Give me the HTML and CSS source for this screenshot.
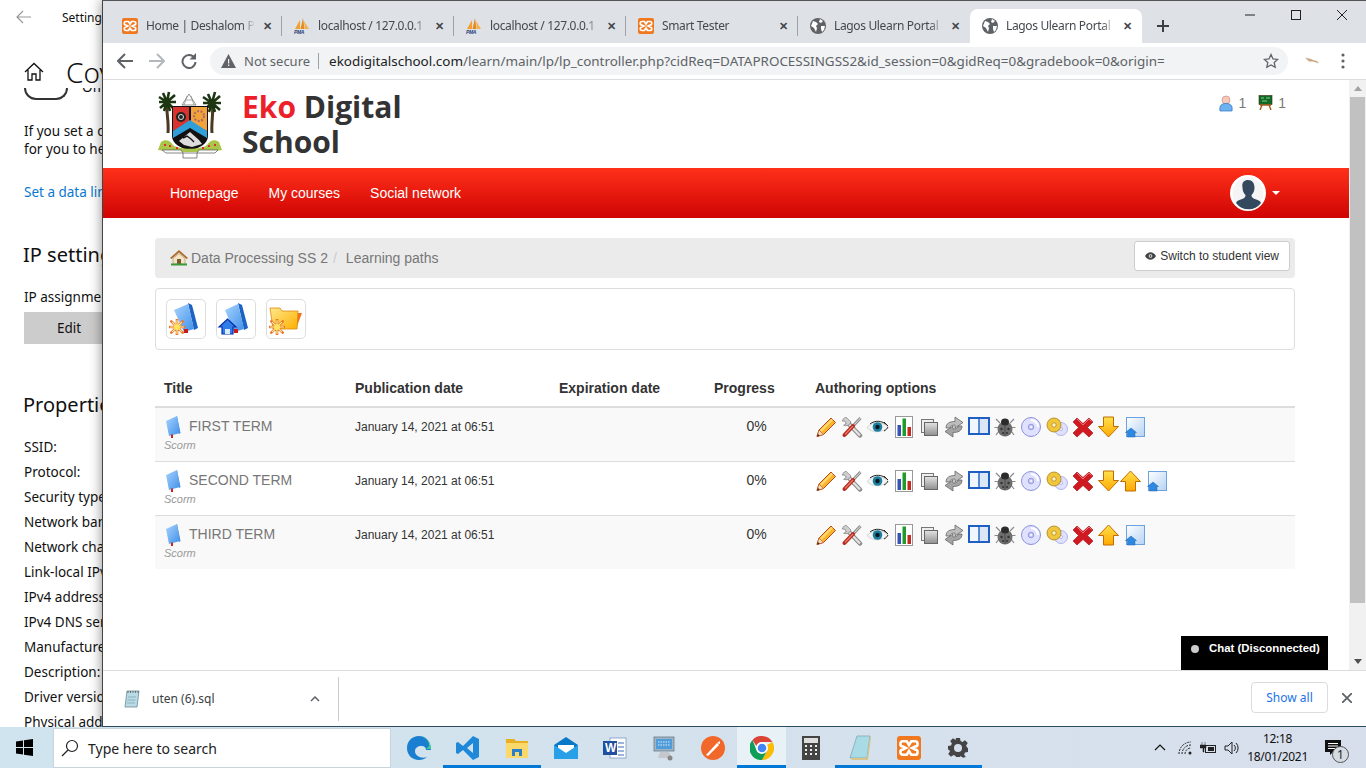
FILE: index.html
```html
<!doctype html>
<html lang="en">
<head>
  <meta charset="UTF-8">
  <meta name="viewport" content="width=device-width, initial-scale=1.0">
  <title>Lagos Ulearn Portal</title>
  <link rel="stylesheet" href="styles.css">
</head>
<body>

<svg class="defs" aria-hidden="true">
  <defs>
    <linearGradient id="g-yellow" x1="0" y1="0" x2="0" y2="1"><stop offset="0" stop-color="#ffe14d"/><stop offset="1" stop-color="#ffa800"/></linearGradient>
    <linearGradient id="g-grey" x1="0" y1="0" x2="0" y2="1"><stop offset="0" stop-color="#e4e4e4"/><stop offset="1" stop-color="#8f8f8f"/></linearGradient>
    <linearGradient id="g-blue" x1="0" y1="0" x2="1" y2="1"><stop offset="0" stop-color="#a8d4ff"/><stop offset="1" stop-color="#3f8fe8"/></linearGradient>
    <linearGradient id="g-page" x1="0" y1="0" x2="1" y2="1"><stop offset="0" stop-color="#ffffff"/><stop offset="1" stop-color="#b4d2f4"/></linearGradient>
    <linearGradient id="g-folder" x1="0" y1="0" x2="1" y2="1"><stop offset="0" stop-color="#ffe88a"/><stop offset="1" stop-color="#ffb000"/></linearGradient>

    <symbol id="i-xampp" viewBox="0 0 16 16">
      <rect width="16" height="16" rx="2" fill="#f0781e"/>
      <path d="M4 3.500h2.500L8 6l1.500-2.500H12a1.500 1.500 0 0 1 0 3.500L10 8l2 1a1.500 1.500 0 0 1 0 3.500H9.500L8 10l-1.500 2.500H4A1.500 1.500 0 0 1 4 9l2-1-2-1a1.500 1.500 0 0 1 0-3.500z" fill="none" stroke="#fff" stroke-width="1.700"/>
    </symbol>
    <symbol id="i-pma" viewBox="0 0 16 16">
      <path d="M1 11 6 2v9z" fill="#f0a030"/><path d="M6.500 11 9 0l1.500 11z" fill="#e88a1a"/><path d="M11 11 10 3l5 8z" fill="#f5b04a"/>
      <text x="0" y="16" class="pma-text">PMA</text>
    </symbol>
    <symbol id="i-globe" viewBox="0 0 16 16">
      <circle cx="8" cy="8" r="8" fill="#5f6368"/>
      <path d="M3 3l3 1 2 2-2 2 1 2-1 4-2-4-3-2zM10 1l3 2-2 2-2-1zM11 8h4l-1 4-2 2-1-3z" fill="#fff"/>
    </symbol>

    <symbol id="i-pencil" viewBox="0 0 22 22">
      <path d="M2 20.500 4 14 16 2l4.500 4.500L8.500 18.500z" fill="#f9b42c" stroke="#b8481c"/>
      <path d="M5 14 16.500 2.800l1.500 1.500L6.500 16z" fill="#ffd76a"/>
      <path d="M2 20.500 4 14l4.500 4.500z" fill="#f7dcb4" stroke="#b8481c" stroke-width=".6"/>
      <path d="M2 20.500l.8-2.800 2 2z" fill="#5c2410"/>
    </symbol>
    <symbol id="i-tools" viewBox="0 0 22 22">
      <path d="M7 7 19 19.500" stroke="#8d8d8d" stroke-width="4.500" stroke-linecap="round"/>
      <path d="M7 7 19 19.500" stroke="#e4e4e4" stroke-width="2.200"/>
      <path d="M5 1.200a5.500 5.500 0 0 0-3.800 3.800l3 .3 1 2.500-2.600 1.500A5.500 5.500 0 0 0 10 6z" fill="#cfcfcf" stroke="#7d7d7d" stroke-width=".7"/>
      <path d="M19.500 2 12 10" stroke="#8f8f8f" stroke-width="3"/>
      <path d="M19.500 2 12 10" stroke="#e0e0e0" stroke-width="1"/>
      <path d="M12 10 3.500 19" stroke="#b7291d" stroke-width="4" stroke-linecap="round"/>
      <path d="M12 10 4 18.500" stroke="#ec7d6a" stroke-width="1.200"/>
    </symbol>
    <symbol id="i-eye" viewBox="0 0 22 22">
      <path d="M0 11.500C5 6 15 5 21 11c-5 6-16 6.500-21 .5z" fill="#f4f4f4" stroke="#bbb" stroke-width=".6"/>
      <circle cx="10.500" cy="11" r="4.800" fill="#1b7fa0"/>
      <circle cx="10.500" cy="11" r="2.200" fill="#0a1820"/>
      <path d="M3 8C8 4 15 4.500 20 9M21 11c-1 2-2 3-4 4M17 6l4 4" fill="none" stroke="#222" stroke-width="1"/>
    </symbol>
    <symbol id="i-stats" viewBox="0 0 22 22">
      <rect x="2.500" y=".5" width="17" height="21" fill="#fff" stroke="#999"/>
      <rect x="4.500" y="9" width="3.500" height="11" fill="#3453b8"/>
      <rect x="9.500" y="2.500" width="3.500" height="17.500" fill="#1e9b2a"/>
      <rect x="14.500" y="11" width="3.500" height="9" fill="#c4281e"/>
    </symbol>
    <symbol id="i-copy" viewBox="0 0 21 22">
      <rect x="2.500" y="3.500" width="12" height="13" fill="#eee" stroke="#777"/>
      <rect x="5.500" y="6.500" width="13" height="13" fill="url(#g-grey)" stroke="#666"/>
    </symbol>
    <symbol id="i-sync" viewBox="0 0 20 22">
      <path d="M18 10c0 5-4 6.500-9 6.500V21l-8-5.500L9 10v3c3 0 5-1 5-3z" fill="#a4a4a4" stroke="#686868" stroke-width=".8"/>
      <path d="M2 12c0-5 4-6.500 9-6.500V1l8 5.500L11 12V9c-3 0-5 1-5 3z" fill="#bdbdbd" stroke="#686868" stroke-width=".8"/>
    </symbol>
    <symbol id="i-columns" viewBox="0 0 22 22">
      <rect x="0" y="1" width="22" height="18" fill="#1f5fc4"/>
      <rect x="2" y="3" width="8.300" height="14" fill="#f2f7ff"/>
      <rect x="11.700" y="3" width="8.300" height="14" fill="#dbe7f7"/>
    </symbol>
    <symbol id="i-bug" viewBox="0 0 22 22">
      <path d="M6 7 2 3M16 7l4-4M4 11.500H.5M18 11.500h3.500M5 15l-3 4M17 15l3 4" stroke="#8a8a8a" stroke-width="1.200"/>
      <ellipse cx="11" cy="13" rx="7.500" ry="7.500" fill="#6e6e6e"/>
      <ellipse cx="11" cy="6" rx="4" ry="3.500" fill="#2b2b2b"/>
      <path d="M11 8v12" stroke="#444" stroke-width=".8"/>
      <circle cx="7.500" cy="13" r="1.200" fill="#333"/><circle cx="14.500" cy="13" r="1.200" fill="#333"/><circle cx="9" cy="17" r="1" fill="#333"/><circle cx="13" cy="17" r="1" fill="#333"/>
    </symbol>
    <symbol id="i-cd" viewBox="0 0 22 22">
      <circle cx="11" cy="11" r="9.500" fill="#dfe1ff" stroke="#8b91dc"/>
      <path d="M11 4a7 7 0 0 1 7 7" fill="none" stroke="#fff" stroke-width="2"/>
      <circle cx="11" cy="11" r="2.800" fill="#c4c7f5" stroke="#7f85d4" stroke-width=".7"/>
      <circle cx="11" cy="11" r="1" fill="#fff"/>
    </symbol>
    <symbol id="i-audio" viewBox="0 0 22 22">
      <circle cx="15" cy="13" r="6.500" fill="#dfe1ff" stroke="#a0a5e4" stroke-width=".8"/>
      <circle cx="15" cy="13" r="1.500" fill="#fff" stroke="#8b91dc" stroke-width=".6"/>
      <circle cx="8" cy="9" r="7" fill="#f0c63c" stroke="#a8801a" stroke-width=".8"/>
      <circle cx="8" cy="9" r="2.200" fill="#fff3bf" stroke="#a8801a" stroke-width=".7"/>
    </symbol>
    <symbol id="i-del" viewBox="0 0 22 22">
      <path d="M5 2 11 7.500 17 2 21 6l-5.500 5.500L21 17l-4 4-6-5.500L5 21 1 17l5.500-5.500L1 6z" fill="#cf1a22" stroke="#9c0c12" stroke-width=".6"/>
      <path d="M5 3 11 9l6-6 2.500 2.500" fill="none" stroke="#f0737a" stroke-width="1"/>
    </symbol>
    <symbol id="i-down" viewBox="0 0 21 22">
      <path d="M5.500 1h10v9.500h5L10.500 21 .5 10.500h5z" fill="url(#g-yellow)" stroke="#c06c00"/>
    </symbol>
    <symbol id="i-up" viewBox="0 0 21 22">
      <path d="M5.500 21h10v-9.500h5L10.500 1 .5 11.500h5z" fill="url(#g-yellow)" stroke="#c06c00"/>
    </symbol>
    <symbol id="i-page" viewBox="0 0 22 22">
      <rect x="3.500" y="1.500" width="18" height="19" fill="url(#g-page)" stroke="#6aa3e0"/>
      <path d="M2.500 16.500 8 12l5.500 4.500H12V21H4.500v-4.500z" fill="#2f88e0" stroke="#1f62b0" stroke-width=".5"/>
    </symbol>
    <symbol id="i-book" viewBox="0 0 16 22">
      <path d="M12 0l3.500 17-1.500 1L11 1z" fill="#3f86d8"/>
      <path d="M1 5 12 0l3 17-11 3z" fill="url(#g-blue)"/>
      <rect x="6" y="18.500" width="2" height="3.500" fill="#d0241c"/>
    </symbol>
    <symbol id="i-burst" viewBox="0 0 16 16">
      <path d="M8 0v16M0 8h16M2.300 2.300l11.400 11.400M13.700 2.300 2.300 13.700" stroke="#e8782a" stroke-width="2.600" stroke-linecap="round"/>
      <path d="M8 1.500v13M1.500 8h13M3.400 3.400l9.200 9.200M12.600 3.400l-9.200 9.200" stroke="#fff2a8" stroke-width="1.100" stroke-linecap="round"/>
      <circle cx="8" cy="8" r="3" fill="#ffe45c"/>
    </symbol>
  </defs>
</svg>

<main class="desktop">
  <section class="settings">
    <div class="settings-top">
      <svg width="16" height="14" viewBox="0 0 16 14" class="settings-back"><path d="M7 1 1 7l6 6M1 7h14" fill="none" stroke="#999" stroke-width="1.200"/></svg>
      <span>Settings</span>
    </div>
    <div class="settings-head">
      <svg width="20" height="20" viewBox="0 0 20 20"><path d="M1 10 10 1.500 19 10M4 8v10h4v-6h4v6h4V8" fill="none" stroke="#111" stroke-width="1.300"/></svg>
      <span>Cov</span>
    </div>
    <div class="settings-toggle-row">
      <div class="settings-toggle"></div>
      <span>Off</span>
    </div>
    <p class="settings-text">If you set a data limit, Windows will set the<br>for you to help you stay under your limit.</p>
    <p class="settings-link">Set a data limit to help control usage</p>
    <h2 class="settings-h">IP settings</h2>
    <p class="settings-row">IP assignment:</p>
    <div class="settings-edit">Edit</div>
    <h2 class="settings-h settings-h-props">Properties</h2>
    <ul class="settings-list">
      <li>SSID:</li>
      <li>Protocol:</li>
      <li>Security type:</li>
      <li>Network band:</li>
      <li>Network channel:</li>
      <li>Link-local IPv6 address:</li>
      <li>IPv4 address:</li>
      <li>IPv4 DNS servers:</li>
      <li>Manufacturer:</li>
      <li>Description:</li>
      <li>Driver version:</li>
      <li>Physical address:</li>
    </ul>
  </section>

  <section class="browser">
    <div class="tabstrip">
      <div class="tab"><svg class="favicon"><use href="#i-xampp"/></svg><span class="tab-title">Home | Deshalom PHP Project</span><span class="tab-x">✕</span></div>
      <div class="tab"><svg class="favicon"><use href="#i-pma"/></svg><span class="tab-title">localhost / 127.0.0.1 | phpMyAdmin</span><span class="tab-x">✕</span></div>
      <div class="tab"><svg class="favicon"><use href="#i-pma"/></svg><span class="tab-title">localhost / 127.0.0.1 | phpMyAdmin</span><span class="tab-x">✕</span></div>
      <div class="tab"><svg class="favicon"><use href="#i-xampp"/></svg><span class="tab-title">Smart Tester</span><span class="tab-x">✕</span></div>
      <div class="tab tab-before-active"><svg class="favicon"><use href="#i-globe"/></svg><span class="tab-title">Lagos Ulearn Portal - Learning</span><span class="tab-x">✕</span></div>
      <div class="tab tab-active"><svg class="favicon"><use href="#i-globe"/></svg><span class="tab-title">Lagos Ulearn Portal - Learning</span><span class="tab-x">✕</span></div>
      <svg class="tab-new" width="14" height="14" viewBox="0 0 14 14"><path d="M7 1v12M1 7h12" stroke="#3c4043" stroke-width="2"/></svg>
      <div class="win-controls">
        <svg width="12" height="12" viewBox="0 0 12 12"><path d="M1 6h10" stroke="#222" stroke-width="1"/></svg>
        <svg width="12" height="12" viewBox="0 0 12 12"><rect x="1.500" y="1.500" width="9" height="9" fill="none" stroke="#222" stroke-width="1"/></svg>
        <svg width="12" height="12" viewBox="0 0 12 12"><path d="M1 1l10 10M11 1 1 11" stroke="#222" stroke-width="1"/></svg>
      </div>
    </div>

    <div class="toolbar">
      <svg class="nav-btn" width="16" height="16" viewBox="0 0 16 16"><path d="M8 1 1 8l7 7M1 8h15" fill="none" stroke="#5f6368" stroke-width="2"/></svg>
      <svg class="nav-btn" width="16" height="16" viewBox="0 0 16 16"><path d="M8 1l7 7-7 7M15 8H0" fill="none" stroke="#b4b7bb" stroke-width="2"/></svg>
      <svg class="nav-btn" width="16" height="16" viewBox="0 0 16 16"><path d="M13.500 5A6.500 6.500 0 1 0 14.500 9" fill="none" stroke="#5f6368" stroke-width="2"/><path d="M15 0v6.500H8.500z" fill="#5f6368"/></svg>
      <div class="omnibox">
        <svg width="15" height="14" viewBox="0 0 15 14"><path d="M7.500 0 15 14H0z" fill="#5f6368"/><path d="M7 5h1.200v4.500H7zM7 10.500h1.200V12H7z" fill="#f1f3f4"/></svg>
        <span class="not-secure">Not secure</span>
        <span class="omni-sep"></span>
        <span class="url"><b>ekodigitalschool.com</b>/learn/main/lp/lp_controller.php?cidReq=DATAPROCESSINGSS2&amp;id_session=0&amp;gidReq=0&amp;gradebook=0&amp;origin=</span>
        <svg class="omni-star" width="16" height="16" viewBox="0 0 16 16"><path d="M8 1.500l2 4.400 4.700.5-3.500 3.200 1 4.700L8 11.900l-4.200 2.400 1-4.700L1.300 6.400 6 5.900z" fill="none" stroke="#5f6368" stroke-width="1.300"/></svg>
      </div>
      <svg class="ext" width="14" height="8" viewBox="0 0 14 8"><path d="M0 .5l6 1.500 2 1 4 1 2 2.500-6-2-4 0z" fill="#c8a882"/></svg>
      <svg class="menu" width="4" height="16" viewBox="0 0 4 16"><circle cx="2" cy="2" r="1.600" fill="#5f6368"/><circle cx="2" cy="8" r="1.600" fill="#5f6368"/><circle cx="2" cy="14" r="1.600" fill="#5f6368"/></svg>
    </div>

    <div class="viewport">
      <div class="page">
        <header class="site-head">
          <svg class="arms" width="64" height="68" viewBox="0 0 64 68">
            <path d="M10 42C11 30 8 22 9 11M54 42c-1-12 2-20 0-30" stroke="#4a3a20" stroke-width="3" fill="none"/>
            <path d="M9 11 1 6M9 11 1 11M9 11 2 17M9 11 5 2M9 11l2-10M9 11l8-7M9 11h9M9 11l7 7M9 11 6 20M9 11l3 9" stroke="#1c3612" stroke-width="2.600" fill="none"/>
            <path d="M54 12l-9-6M54 12h-9M54 12l-7 6M54 12 50 3M54 12l3-11M54 12l8-7M54 12h9M54 12l8 7M54 12l-3 9M54 12l3 9" stroke="#1c3612" stroke-width="2.600" fill="none"/>
            <path d="M24 14 31 3l7 11z" fill="#fff" stroke="#777" stroke-width=".8"/>
            <path d="M27 9h8M29 5l-3 9M33 5l3 9" stroke="#888" stroke-width=".7"/>
            <path d="M14 15h36v30c0 8-9 12-18 15-9-3-18-7-18-15z" fill="#111"/>
            <path d="M15 16h16v16l-16 8z" fill="#d8332c"/>
            <path d="M33 16h16v24l-16-8z" fill="#f2a23a"/>
            <path d="M15 40 32 29l17 11v7L32 37 15 47z" fill="#2e9fd8"/>
            <circle cx="23" cy="26" r="5" fill="#222"/><circle cx="23" cy="26" r="2.500" fill="none" stroke="#ddd" stroke-width="1"/>
            <circle cx="41" cy="25" r="5" fill="none" stroke="#a66" stroke-width="2" stroke-dasharray="2 1.500"/>
            <path d="M21 50l11-9 9 8 3 4-10 3-8-2z" fill="#ddd"/>
            <path d="M25 47l4-2 4 3 3 3" stroke="#111" stroke-width="1.400" fill="none"/>
            <path d="M3 51c4-3 9-2 12 3 6 5 28 5 34 0 3-5 8-6 12-3l3 8-12 2H13L0 59z" fill="#a9c64a"/>
            <path d="M6 54h2M11 55h2M50 55h2M56 54h2M18 57h2M44 57h2" stroke="#d8332c" stroke-width="2"/>
            <path d="M4 59h19l2 3H8zM41 59h19l-3 3H39zM25 62h14v5H25z" fill="#fff" stroke="#555" stroke-width=".7"/>
          </svg>
          <div class="brand"><span class="brand-red">Eko</span> Digital<br>School</div>
          <div class="head-stats">
            <svg width="14" height="17" viewBox="0 0 14 17"><circle cx="7" cy="5" r="4" fill="#f6c9bd" stroke="#cf8c7c" stroke-width=".7"/><path d="M1 16c-1-6 2-7.500 6-7.500s7 1.500 6 7.500z" fill="#6db1f0" stroke="#2f74c0" stroke-width=".7"/></svg>
            <span class="stat-num">1</span>
            <svg class="board" width="16" height="15" viewBox="0 0 16 15"><rect x="2" y=".5" width="13" height="9" fill="#0f6a26" stroke="#3b2a10" stroke-width=".6"/><path d="M4 3h3M9 3h4M5 6h5" stroke="#a9e0a9" stroke-width=".8"/><path d="M3 10h11M5 10l-2 5M12 10l2 5" stroke="#a5591a" stroke-width="1.400"/></svg>
            <span class="stat-num">1</span>
          </div>
        </header>

        <nav class="site-nav">
          <a>Homepage</a>
          <a>My courses</a>
          <a>Social network</a>
          <div class="nav-user">
            <svg width="36" height="36" viewBox="0 0 36 36">
              <circle cx="18" cy="18" r="18" fill="#fff"/>
              <circle cx="18" cy="18" r="15.500" fill="#f5f5f5"/>
              <path d="M18 5c4.500 0 6.500 3.500 6.500 7.500 0 3-1 5.500-3 7.500 0 2.500 1 3 4 4.200 3 1 5 2 5.500 3.800a15.500 15.500 0 0 1-25 0c.5-1.800 2.500-2.800 5.500-3.800 3-1.200 4-1.700 4-4.200-2-2-3-4.500-3-7.500C11.500 8.500 13.500 5 18 5z" fill="#34495e"/>
            </svg>
            <span class="caret"></span>
          </div>
        </nav>

        <div class="container">
          <div class="crumbs">
            <svg width="18" height="16" viewBox="0 0 18 16"><path d="M0 8 9 0l9 8-1.500 1L9 2.500 1.500 9z" fill="#b06a2a"/><path d="M3 8.500 9 3.500l6 5V14H3z" fill="#f3e4c6" stroke="#a98a5a" stroke-width=".6"/><rect x="7" y="9" width="4" height="5" fill="#7a5a30"/><rect x="1" y="13.500" width="16" height="2" fill="#3f9a3a"/></svg>
            <span class="crumb">Data Processing SS 2</span>
            <span class="crumb-sep">/</span>
            <span class="crumb">Learning paths</span>
            <button class="btn-student">
              <svg width="11" height="8" viewBox="0 0 11 8"><path d="M0 4c3-5 8-5 11 0-3 5-8 5-11 0z" fill="#444"/><circle cx="5.500" cy="4" r="1.800" fill="#fff"/><circle cx="5.500" cy="4" r="1" fill="#444"/></svg>
              Switch to student view
            </button>
          </div>

          <div class="actions">
            <a class="action">
              <svg width="38" height="38" viewBox="1 1 38 38">
                <path d="M22 4 26 6l6 23-4 2z" fill="#1d63c4"/>
                <path d="M8 11 22 5l6 25-10 3z" fill="url(#g-blue)"/>
                <rect x="18" y="30" width="4" height="4" fill="#cf1a1a"/>
                <svg x="3" y="20" width="16" height="16"><use href="#i-burst"/></svg>
              </svg>
            </a>
            <a class="action">
              <svg width="38" height="38" viewBox="1 1 38 38">
                <path d="M22 4 26 6l6 23-4 2z" fill="#1d63c4"/>
                <path d="M9 11 22 5l6 25-10 3z" fill="url(#g-blue)"/>
                <rect x="18" y="30" width="4" height="4" fill="#cf1a1a"/>
                <path d="M3 28 11.500 20l8.500 8h-3v7H6v-7z" fill="#2f7de8" stroke="#0a2fa8" stroke-width="1.200"/>
                <rect x="9" y="30" width="5" height="5" fill="#d9ecff"/>
              </svg>
            </a>
            <a class="action">
              <svg width="38" height="38" viewBox="1 1 38 38">
                <path d="M30 14h6l-6 16h-5z" fill="#f2731c"/>
                <path d="M4 9h10l2 3h16l-1 18H7z" fill="url(#g-folder)" stroke="#d98a10" stroke-width=".8"/>
                <svg x="3" y="20" width="16" height="16"><use href="#i-burst"/></svg>
              </svg>
            </a>
          </div>

          <table class="lp-table">
            <colgroup>
              <col class="col-title"><col class="col-pub"><col class="col-exp"><col class="col-prog"><col>
            </colgroup>
            <thead>
              <tr><th>Title</th><th>Publication date</th><th>Expiration date</th><th>Progress</th><th>Authoring options</th></tr>
            </thead>
            <tbody>
              <tr>
                <td><div class="lp-name"><svg class="lp-book"><use href="#i-book"/></svg>FIRST TERM</div><div class="lp-type">Scorm</div></td>
                <td class="lp-date">January 14, 2021 at 06:51</td><td></td><td class="lp-prog">0%</td>
                <td><div class="opts">
                  <svg class="opt"><use href="#i-pencil"/></svg><svg class="opt"><use href="#i-tools"/></svg><svg class="opt"><use href="#i-eye"/></svg><svg class="opt"><use href="#i-stats"/></svg><svg class="opt opt-copy"><use href="#i-copy"/></svg><svg class="opt opt-sync"><use href="#i-sync"/></svg><svg class="opt"><use href="#i-columns"/></svg><svg class="opt"><use href="#i-bug"/></svg><svg class="opt"><use href="#i-cd"/></svg><svg class="opt"><use href="#i-audio"/></svg><svg class="opt"><use href="#i-del"/></svg><svg class="opt opt-arrow"><use href="#i-down"/></svg><svg class="opt"><use href="#i-page"/></svg>
                </div></td>
              </tr>
              <tr>
                <td><div class="lp-name"><svg class="lp-book"><use href="#i-book"/></svg>SECOND TERM</div><div class="lp-type">Scorm</div></td>
                <td class="lp-date">January 14, 2021 at 06:51</td><td></td><td class="lp-prog">0%</td>
                <td><div class="opts">
                  <svg class="opt"><use href="#i-pencil"/></svg><svg class="opt"><use href="#i-tools"/></svg><svg class="opt"><use href="#i-eye"/></svg><svg class="opt"><use href="#i-stats"/></svg><svg class="opt opt-copy"><use href="#i-copy"/></svg><svg class="opt opt-sync"><use href="#i-sync"/></svg><svg class="opt"><use href="#i-columns"/></svg><svg class="opt"><use href="#i-bug"/></svg><svg class="opt"><use href="#i-cd"/></svg><svg class="opt"><use href="#i-audio"/></svg><svg class="opt"><use href="#i-del"/></svg><svg class="opt opt-arrow"><use href="#i-down"/></svg><svg class="opt opt-arrow opt-up-after"><use href="#i-up"/></svg><svg class="opt"><use href="#i-page"/></svg>
                </div></td>
              </tr>
              <tr>
                <td><div class="lp-name"><svg class="lp-book"><use href="#i-book"/></svg>THIRD TERM</div><div class="lp-type">Scorm</div></td>
                <td class="lp-date">January 14, 2021 at 06:51</td><td></td><td class="lp-prog">0%</td>
                <td><div class="opts">
                  <svg class="opt"><use href="#i-pencil"/></svg><svg class="opt"><use href="#i-tools"/></svg><svg class="opt"><use href="#i-eye"/></svg><svg class="opt"><use href="#i-stats"/></svg><svg class="opt opt-copy"><use href="#i-copy"/></svg><svg class="opt opt-sync"><use href="#i-sync"/></svg><svg class="opt"><use href="#i-columns"/></svg><svg class="opt"><use href="#i-bug"/></svg><svg class="opt"><use href="#i-cd"/></svg><svg class="opt"><use href="#i-audio"/></svg><svg class="opt"><use href="#i-del"/></svg><svg class="opt opt-arrow"><use href="#i-up"/></svg><svg class="opt"><use href="#i-page"/></svg>
                </div></td>
              </tr>
            </tbody>
          </table>
        </div>

        <div class="chat"><span class="chat-dot"></span>Chat (Disconnected)</div>
      </div>

      <div class="scrollbar">
        <span class="sb-up"></span>
        <div class="sb-track"><div class="sb-thumb"></div></div>
        <span class="sb-down"></span>
      </div>
    </div>

    <div class="downloads">
      <div class="dl-item">
        <svg width="16" height="18" viewBox="0 0 16 18"><path d="M3 1h12l-2 16H1z" fill="#b9dbe6" stroke="#6a8a94" stroke-width=".8"/><path d="M4 1v2M6.500 1v2M9 1v2M11.500 1v2M14 1v2" stroke="#555" stroke-width=".8"/><path d="M4 7h8M3.500 10h8M3 13h8" stroke="#7fa9b6" stroke-width=".8"/></svg>
        <span class="dl-name">uten (6).sql</span>
        <svg class="dl-caret" width="10" height="6" viewBox="0 0 10 6"><path d="M1 5l4-4 4 4" fill="none" stroke="#5f6368" stroke-width="1.500"/></svg>
      </div>
      <a class="dl-all">Show all</a>
      <svg class="dl-close" width="10" height="10" viewBox="0 0 10 10"><path d="M0 0l10 10M10 0 0 10" stroke="#5f6368" stroke-width="1.800"/></svg>
    </div>
  </section>
</main>

<footer class="taskbar">
  <div class="start">
    <svg width="17" height="17" viewBox="0 0 17 17"><path d="M0 2.400 7 1.400V8H0zM8 1.200 17 0v8H8zM0 9h7v6.600L0 14.600zM8 9h9v8l-9-1.200z" fill="#000"/></svg>
  </div>
  <div class="search">
    <svg width="18" height="18" viewBox="0 0 18 18"><circle cx="11" cy="7" r="5.500" fill="none" stroke="#222" stroke-width="1.200"/><path d="M7 11l-6 6" stroke="#222" stroke-width="1.300"/></svg>
    <span>Type here to search</span>
  </div>
  <div class="apps">
    <div class="app">
      <svg width="26" height="26" viewBox="0 0 26 26"><path d="M13 1C6 1 1 6 1 13c0 7 5 12 12 12 3 0 6-1 8-3-6 2-12-1-12-6 0-3 3-5 6-5 4 0 5 2 5 4h5c0-8-5-14-12-14z" fill="#1a7fd0"/><path d="M25 14c0-7-5-13-12-13 5 0 10 4 10 9 0 2-2 4-5 4h7z" fill="#3ecf8e"/></svg>
    </div>
    <div class="app app-open">
      <svg width="24" height="24" viewBox="0 0 24 24"><path d="M17 0l6 3v18l-6 3-10-10-5 4-2-1V7l2-1 5 4zM17 7l-6 5 6 5z" fill="#1f88d8"/></svg>
    </div>
    <div class="app app-open">
      <svg width="22" height="22" viewBox="0 0 22 22"><path d="M0 2h8l2 2h12v5H0z" fill="#e8b020"/><rect y="6" width="22" height="15" fill="#fbd86a"/><path d="M6 12h10v7h-3v-4H9v4H6z" fill="#2a80c8"/></svg>
    </div>
    <div class="app">
      <svg width="24" height="24" viewBox="0 0 24 24"><path d="M12 1 24 9v14H0V9z" fill="#0a78c8"/><path d="M4 9h16v6l-8 4-8-4z" fill="#fff"/><path d="M0 9l12 8 12-8v14H0z" fill="#28a0e8"/></svg>
    </div>
    <div class="app">
      <svg width="24" height="24" viewBox="0 0 24 24"><rect x="7" y="2" width="16" height="20" fill="#fff" stroke="#7a96c4" stroke-width=".8"/><path d="M15 7h6M15 11h6M15 15h6M15 19h6" stroke="#3a6ab8"/><rect y="5" width="14" height="14" fill="#1f4f9e"/><text x="2" y="16" class="word-w">W</text></svg>
    </div>
    <div class="app">
      <svg width="24" height="26" viewBox="0 0 24 26"><rect x="2" y="2" width="20" height="14" fill="#9fb4c4" stroke="#6a7a88" stroke-width=".8"/><rect x="4" y="4" width="16" height="10" fill="#4f9cd8"/><path d="M6 7h12M6 10h12" stroke="#d8ecfa" stroke-dasharray="1.500 1"/><path d="M8 17h9l3 6H6z" fill="#c4c8cc"/><circle cx="18" cy="23" r="2.500" fill="#888"/></svg>
    </div>
    <div class="app">
      <svg width="24" height="24" viewBox="0 0 24 24"><circle cx="12" cy="12" r="12" fill="#f2682a"/><path d="M5 19 16 7l2 2L7 20zM16 7l3-2v3z" fill="#fff"/></svg>
    </div>
    <div class="app app-open app-active">
      <svg width="24" height="24" viewBox="0 0 24 24"><path d="M12 0a12 12 0 0 1 10.400 6H12a6 6 0 0 0-5.700 4L2.500 4A12 12 0 0 1 12 0z" fill="#db4437"/><path d="M22.400 6A12 12 0 0 1 12 24l5.200-9A6 6 0 0 0 17 9z" fill="#fbbc05"/><path d="M2.500 4A12 12 0 0 0 12 24l5-9a6 6 0 0 1-10.500-.5z" fill="#0f9d58"/><circle cx="12" cy="12" r="5" fill="#4285f4" stroke="#fff" stroke-width="1.400"/></svg>
    </div>
    <div class="app">
      <svg width="18" height="24" viewBox="0 0 18 24"><rect width="18" height="24" fill="#444"/><rect x="2" y="2" width="14" height="5" fill="#ddd"/><path d="M3 10h2M8 10h2M13 10h2M3 14h2M8 14h2M13 14h2M3 18h2M8 18h2M13 18h2" stroke="#eee" stroke-width="2"/></svg>
    </div>
    <div class="app app-open">
      <svg width="24" height="26" viewBox="0 0 24 26"><path d="M9 1h13l-3 22H2z" fill="#a9dbe6" stroke="#7aa0aa" stroke-width=".7"/><path d="M19 23 22 1l1 2-3 22H4l-2-2z" fill="#d9c48a"/></svg>
    </div>
    <div class="app app-open">
      <svg width="24" height="24"><use href="#i-xampp"/></svg>
    </div>
    <div class="app app-open">
      <svg width="20" height="20" viewBox="0 0 20 20"><path d="M8 0h4l.5 3 2 .9L17 2.200 19.800 5l-1.700 2.500.9 2 1 .5v4l-3 .5-.9 2 1.700 2.500L15 19.800l-2.500-1.700-.5.9H8l-.5-1-2-.9L3 18.800.2 16l1.700-2.500-.9-2L0 12V8l3-.5.9-2L2.200 3 5 .2l2.500 1.700z" fill="#444"/><circle cx="10" cy="10" r="4" fill="#d5dfec"/></svg>
    </div>
  </div>
  <div class="tray">
    <svg width="12" height="7" viewBox="0 0 12 7"><path d="M1 6l5-5 5 5" fill="none" stroke="#111" stroke-width="1.200"/></svg>
    <svg class="tray-wifi" width="14" height="14" viewBox="0 0 14 14"><path d="M1 13A12 12 0 0 1 13 1M4 13a9 9 0 0 1 9-9M7 13a6 6 0 0 1 6-6" fill="none" stroke="#222" stroke-width="1" stroke-dasharray="2 1"/><circle cx="12" cy="12" r="1.500" fill="#222"/></svg>
    <svg width="16" height="12" viewBox="0 0 16 12"><rect x="5.500" y="3.500" width="10" height="7" fill="#d5dfec" stroke="#222"/><rect x="8" y="5" width="6" height="4" fill="#222"/><path d="M2 0v3M5 0v3M0 3h6v3H4v4H3V6H0z" fill="#222" stroke="#222" stroke-width=".5"/></svg>
    <svg width="16" height="14" viewBox="0 0 16 14"><path d="M1 5h3l4-4v12L4 9H1z" fill="none" stroke="#222" stroke-width="1"/><path d="M10 4a4 4 0 0 1 0 6M12 2a7 7 0 0 1 0 10" fill="none" stroke="#222" stroke-width="1"/></svg>
    <div class="clock"><span>12:18</span><span>18/01/2021</span></div>
    <div class="notif">
      <svg width="16" height="15" viewBox="0 0 16 15"><path d="M0 0h16v12H8l-3 3v-3H0z" fill="#111"/><path d="M3 3.500h10M3 6h10M3 8.500h10" stroke="#fff"/></svg>
      <span class="notif-badge">1</span>
    </div>
  </div>
</footer>

</body>
</html>
```

FILE: styles.css
```css
* {
  box-sizing: border-box;
}

html, body {
  margin: 0;
  height: 100%;
}

body {
  display: flex;
  flex-direction: column;
  width: 1366px;
  height: 768px;
  overflow: hidden;
  font-family: "Liberation Sans", Arial, sans-serif;
  background: #fff;
}

.defs {
  position: absolute;
  width: 0;
  height: 0;
}

.pma-text {
  font-family: "Liberation Sans", sans-serif;
  font-size: 5px;
  font-weight: bold;
  font-style: italic;
  fill: #27407a;
}

.word-w {
  font-family: "Liberation Sans", sans-serif;
  font-size: 12px;
  font-weight: bold;
  fill: #fff;
}

/* desktop: two windows on top of each other */
.desktop {
  position: relative;
  flex: none;
  height: 727px;
  overflow: hidden;
}

.settings {
  position: absolute;
  left: 0;
  top: 0;
  width: 400px;
  height: 727px;
  padding-left: 24px;
  overflow: hidden;
  background: #fff;
  font-family: "Noto Sans", sans-serif;
  font-size: 13.5px;
  color: #111;
  white-space: nowrap;
}

.settings-top {
  display: flex;
  align-items: center;
  height: 34px;
  font-size: 12px;
}

.settings-back {
  margin-left: -8px;
  margin-right: 30px;
}

.settings-head {
  display: flex;
  align-items: center;
  gap: 22px;
  height: 36px;
  margin-top: 20px;
  font-size: 28px;
  font-weight: 300;
}

.settings-toggle-row {
  display: flex;
  height: 12px;
  margin-top: -2px;
  overflow: hidden;
}

.settings-toggle-row span {
  margin: -10px 0 0 14px;
}

.settings-toggle {
  flex: none;
  width: 44px;
  height: 12px;
  border: 2px solid #333;
  border-top: none;
  border-radius: 0 0 12px 12px;
}

.settings-text {
  margin: 22px 0 0;
  line-height: 18px;
}

.settings-link {
  margin: 25px 0 0;
  line-height: 18px;
  color: #0a78d0;
}

.settings-h {
  margin: 41px 0 0 -1px;
  font-size: 20px;
  line-height: 26px;
  font-weight: 400;
}

.settings-h-props {
  margin-top: 48px;
}

.settings-row {
  margin: 20px 0 0;
  line-height: 18px;
}

.settings-edit {
  width: 90px;
  height: 32px;
  margin-top: 6px;
  background: #ccc;
  line-height: 32px;
  text-align: center;
}

.settings-list {
  list-style: none;
  margin: 17px 0 0;
  padding: 0;
}

.settings-list li {
  height: 25px;
  line-height: 25px;
}

/* chrome window */
.browser {
  position: absolute;
  left: 102px;
  top: 0;
  right: 0;
  bottom: 0;
  display: flex;
  flex-direction: column;
  border-top: 1px solid #555;
  border-left: 1px solid #444;
  border-bottom: 1px solid #2c4a60;
  background: #fff;
  box-shadow: 0 0 12px rgba(0, 0, 0, 0.45);
}

.tabstrip {
  display: flex;
  align-items: flex-end;
  flex: none;
  height: 42px;
  padding-left: 7px;
  background: #dee1e6;
  font-family: "Noto Sans", sans-serif;
}

.tab {
  position: relative;
  display: flex;
  align-items: center;
  width: 172px;
  height: 34px;
  padding: 0 6px 1px 12px;
  font-size: 12px;
  letter-spacing: -0.35px;
  color: #45494e;
}

.tab::after {
  content: "";
  position: absolute;
  right: 0;
  top: 7px;
  height: 20px;
  width: 1px;
  background: #9ea1a6;
}

.tab-before-active::after,
.tab-active::after {
  display: none;
}

.tab-active {
  background: #fff;
  border-radius: 8px 8px 0 0;
}

.favicon {
  flex: none;
  width: 16px;
  height: 16px;
  margin-right: 8px;
}

.tab-title {
  flex: 1;
  overflow: hidden;
  white-space: nowrap;
  -webkit-mask-image: linear-gradient(to right, #000 88%, transparent);
  mask-image: linear-gradient(to right, #000 88%, transparent);
}

.tab-x {
  flex: none;
  width: 18px;
  margin-left: 3px;
  font-size: 11px;
  font-weight: bold;
  text-align: center;
  color: #44474b;
}

.tab-new {
  margin: 0 0 10px 14px;
}

.win-controls {
  display: flex;
  gap: 34px;
  margin-left: 74px;
  align-self: flex-start;
  margin-top: 8px;
}

.toolbar {
  display: flex;
  align-items: center;
  flex: none;
  height: 37px;
  padding-left: 14px;
  border-bottom: 1px solid #dadce0;
  background: #fff;
}

.nav-btn {
  margin-right: 16px;
}

.omnibox {
  display: flex;
  align-items: center;
  width: 1078px;
  height: 28px;
  margin-left: -3px;
  padding: 0 9px 0 11px;
  border-radius: 14px;
  background: #f1f3f4;
  font-family: "Noto Sans", sans-serif;
  font-size: 13px;
  white-space: nowrap;
}

.not-secure {
  margin-left: 8px;
  color: #5f6368;
}

.omni-sep {
  width: 1px;
  height: 16px;
  margin: 0 10px 0 8px;
  background: #9aa0a6;
}

.url {
  flex: 1;
  font-size: 13.45px;
  color: #5f6368;
}

.url b {
  font-weight: 400;
  color: #202124;
}

.ext {
  margin-left: 17px;
}

.menu {
  margin-left: 22px;
}

/* page area */
.viewport {
  display: flex;
  flex: 1;
  min-height: 0;
  border-bottom: 1px solid #dadce0;
}

.page {
  position: relative;
  flex: 1;
  min-width: 0;
  background: #fff;
  color: #333;
  font-size: 14px;
}

.site-head {
  display: flex;
  height: 88px;
  padding: 11px 0 0 55px;
}

.brand {
  margin: -2px 0 0 20px;
  font-family: "Open Sans", sans-serif;
  font-size: 30px;
  font-weight: 700;
  line-height: 35px;
  color: #333;
}

.brand-red {
  color: #ed1f2b;
}

.head-stats {
  display: flex;
  align-items: flex-start;
  margin-left: auto;
  margin-right: 63px;
  padding-top: 4px;
  font-size: 14px;
  color: #777;
}

.stat-num {
  margin-left: 5px;
  line-height: 16px;
}

.board {
  margin-left: 11px;
}

.site-nav {
  display: flex;
  align-items: center;
  height: 50px;
  padding-left: 67px;
  gap: 30px;
  background: linear-gradient(to bottom, #ff3019, #cf0404);
  color: #fff;
}

.nav-user {
  display: flex;
  align-items: center;
  margin-left: auto;
  margin-right: 69px;
}

.caret {
  width: 0;
  height: 0;
  margin-left: 6px;
  border-left: 4px solid transparent;
  border-right: 4px solid transparent;
  border-top: 4px solid #fff;
}

.container {
  width: 1140px;
  margin-left: 52px;
  padding-top: 20px;
}

.crumbs {
  display: flex;
  align-items: center;
  height: 40px;
  padding: 0 5px 0 15px;
  border-radius: 4px;
  background: #ebebeb;
  color: #777;
}

.crumb {
  margin-left: 3px;
}

.crumb-sep {
  margin: 0 6px 0 5px;
  color: #ccc;
}

.btn-student {
  display: flex;
  align-items: center;
  gap: 4px;
  height: 30px;
  margin: -4px 0 0 auto;
  padding: 0 10px;
  border: 1px solid #ccc;
  border-radius: 3px;
  background: #fff;
  color: #333;
  font-family: "Liberation Sans", sans-serif;
  font-size: 12px;
}

.actions {
  display: flex;
  gap: 10px;
  height: 62px;
  margin-top: 10px;
  padding: 10px;
  border: 1px solid #ddd;
  border-radius: 4px;
}

.action {
  display: flex;
  align-items: center;
  justify-content: center;
  width: 40px;
  height: 40px;
  border: 1px solid #ddd;
  border-radius: 5px;
  background: #fff;
}

.lp-table {
  width: 100%;
  margin-top: 20px;
  border-collapse: collapse;
  table-layout: fixed;
}

.col-title { width: 191px; }
.col-pub { width: 204px; }
.col-exp { width: 155px; }
.col-prog { width: 101px; }

.lp-table th {
  height: 37px;
  padding: 0 9px;
  border-bottom: 2px solid #ddd;
  text-align: left;
  vertical-align: middle;
  color: #333;
}

.lp-table td {
  height: 54px;
  padding: 8px 9px 0;
  border-top: 1px solid #ddd;
  vertical-align: top;
}

.lp-table tbody tr:nth-child(odd) {
  background: #f9f9f9;
}

.lp-name {
  display: flex;
  align-items: flex-start;
  height: 21px;
  color: #777;
  line-height: 20px;
}

.lp-book {
  flex: none;
  width: 16px;
  height: 22px;
  margin-right: 8px;
  margin-left: 1px;
}

.lp-type {
  margin-top: 2px;
  font-size: 11px;
  font-style: italic;
  color: #999;
  line-height: 12px;
}

.lp-table .lp-date {
  padding-top: 12px;
  font-size: 12px;
  color: #333;
}

.lp-table .lp-prog {
  padding: 10px 0 0 2px;
  text-align: center;
}

.opts {
  display: flex;
  gap: 4px;
}

.opt {
  flex: none;
  width: 22px;
  height: 22px;
}

.opt-copy { width: 21px; }
.opt-sync { width: 20px; }
.opt-arrow { width: 21px; }
.opt-up-after { margin-left: -3px; }

.chat {
  position: absolute;
  right: 21px;
  bottom: 0;
  display: flex;
  align-items: flex-start;
  width: 147px;
  height: 34px;
  padding: 5px 0 0 10px;
  background: #000;
  color: #fff;
  font-size: 11.4px;
  font-weight: bold;
  line-height: 14px;
}

.chat-dot {
  flex: none;
  width: 8px;
  height: 8px;
  margin: 4px 10px 0 0;
  border-radius: 50%;
  background: #ccc;
}

.scrollbar {
  display: flex;
  flex-direction: column;
  flex: none;
  width: 17px;
  background: #f1f1f1;
}

.sb-up,
.sb-down {
  flex: none;
  width: 0;
  height: 0;
  margin: 6px auto;
  border-left: 4px solid transparent;
  border-right: 4px solid transparent;
}

.sb-up { border-bottom: 5px solid #a3a3a3; }
.sb-down { border-top: 5px solid #505050; }

.sb-track {
  flex: 1;
}

.sb-thumb {
  width: 15px;
  height: 506px;
  margin: 0 1px;
  background: #c1c1c1;
}

/* download shelf */
.downloads {
  display: flex;
  align-items: center;
  flex: none;
  height: 55px;
  padding-left: 21px;
  background: #fff;
  font-family: "Noto Sans", sans-serif;
  font-size: 12px;
}

.dl-item {
  display: flex;
  align-items: center;
  width: 215px;
  height: 44px;
  border-right: 1px solid #c8cacc;
}

.dl-name {
  margin-left: 12px;
  color: #3c4043;
}

.dl-caret {
  margin-left: 95px;
}

.dl-all {
  display: block;
  width: 77px;
  height: 31px;
  margin: -2px 0 0 auto;
  border: 1px solid #dadce0;
  border-radius: 4px;
  color: #1a73e8;
  line-height: 29px;
  text-align: center;
}

.dl-close {
  margin: -2px 14px 0 14px;
}

/* windows taskbar */
.taskbar {
  display: flex;
  flex: 1;
  background: linear-gradient(to right, #cfe4ee, #d8dfec);
}

.start {
  display: flex;
  align-items: center;
  justify-content: center;
  width: 48px;
}

.search {
  display: flex;
  align-items: center;
  gap: 9px;
  width: 338px;
  margin: 1px 0 0 5px;
  padding-left: 7px;
  border: 1px solid #c8d4dc;
  background: #fff;
  font-family: "Noto Sans", sans-serif;
  font-size: 14px;
  color: #222;
}

.apps {
  display: flex;
  margin-left: 3px;
}

.app {
  display: flex;
  align-items: center;
  justify-content: center;
  width: 49px;
  height: 41px;
}

.app-open {
  border-bottom: 3px solid #0078d7;
  padding-top: 3px;
}

.app-active {
  background: #e8f1f6;
}

.tray {
  display: flex;
  align-items: center;
  gap: 8px;
  margin-left: auto;
  padding-right: 25px;
}

.tray-wifi {
  margin-left: 4px;
}

.clock {
  display: flex;
  flex-direction: column;
  align-items: center;
  margin-left: -1px;
  font-family: "Noto Sans", sans-serif;
  font-size: 12px;
  letter-spacing: -0.3px;
  line-height: 18px;
  color: #111;
}

.notif {
  position: relative;
  display: flex;
  margin-left: 9px;
}

.notif-badge {
  position: absolute;
  left: 7px;
  top: 6px;
  width: 17px;
  height: 17px;
  border: 1px solid #555;
  border-radius: 50%;
  background: #d5dce4;
  font-family: "Noto Sans", sans-serif;
  font-size: 12px;
  line-height: 15px;
  text-align: center;
  color: #222;
}
```
